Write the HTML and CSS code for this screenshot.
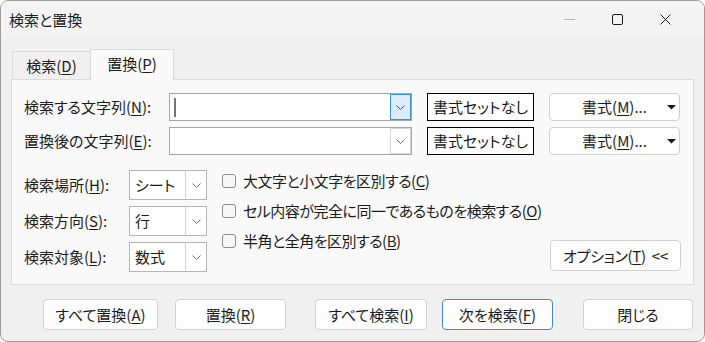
FILE: index.html
```html
<!DOCTYPE html>
<html lang="ja">
<head>
	<meta charset="UTF-8">
	<title>検索と置換</title>
	<link rel="stylesheet" href="styles.css">
</head>
<body>
	<div class="win">
		<div class="titlebar">
			<span class="title">検索と置換</span>
			<div class="ctrls">
				<span class="ctrl"><svg width="11" height="11" viewBox="0 0 11 11"><line x1="0" y1="5.5" x2="11" y2="5.5" stroke="#b4b4b4" stroke-width="1"/></svg></span>
				<span class="ctrl"><svg width="11" height="11" viewBox="0 0 11 11"><rect x="0.5" y="0.5" width="10" height="10" rx="1.5" fill="none" stroke="#1b1b1b" stroke-width="1"/></svg></span>
				<span class="ctrl"><svg width="11" height="11" viewBox="0 0 11 11"><path d="M0.5 0.5L10.5 10.5M10.5 0.5L0.5 10.5" stroke="#1b1b1b" stroke-width="1"/></svg></span>
			</div>
		</div>

		<div class="tabs">
			<div class="tab">検索(<u>D</u>)</div>
			<div class="tab active">置換(<u>P</u>)</div>
		</div>

		<div class="panel">
			<div class="top">
				<div class="lbl">検索する文字列(<u>N</u>):</div>
				<div class="edit">
					<span class="text"><span class="caret"></span></span>
					<span class="drop hot"><svg width="9" height="5" viewBox="0 0 9 5"><polyline points="0.5,0.5 4.5,4.5 8.5,0.5" fill="none" stroke="#505050" stroke-width="1"/></svg></span>
				</div>
				<div class="fmtbox">書式セットなし</div>
				<div class="btn fmt"><span></span><span>書式(<u>M</u>)...</span><span class="tri"><svg width="9" height="5" viewBox="0 0 9 5"><polygon points="0,0 9,0 4.5,4.5" fill="#1b1b1b"/></svg></span></div>

				<div class="lbl">置換後の文字列(<u>E</u>):</div>
				<div class="edit">
					<span class="text"></span>
					<span class="drop"><svg width="9" height="5" viewBox="0 0 9 5"><polyline points="0.5,0.5 4.5,4.5 8.5,0.5" fill="none" stroke="#707070" stroke-width="1"/></svg></span>
				</div>
				<div class="fmtbox">書式セットなし</div>
				<div class="btn fmt"><span></span><span>書式(<u>M</u>)...</span><span class="tri"><svg width="9" height="5" viewBox="0 0 9 5"><polygon points="0,0 9,0 4.5,4.5" fill="#1b1b1b"/></svg></span></div>
			</div>

			<div class="lower">
				<div class="fields">
					<div class="lbl">検索場所(<u>H</u>):</div>
					<div class="combo"><span class="val">シート</span><span class="arr"><svg width="9" height="5" viewBox="0 0 9 5"><polyline points="0.5,0.5 4.5,4.5 8.5,0.5" fill="none" stroke="#707070" stroke-width="1"/></svg></span></div>
					<div class="lbl">検索方向(<u>S</u>):</div>
					<div class="combo"><span class="val">行</span><span class="arr"><svg width="9" height="5" viewBox="0 0 9 5"><polyline points="0.5,0.5 4.5,4.5 8.5,0.5" fill="none" stroke="#707070" stroke-width="1"/></svg></span></div>
					<div class="lbl">検索対象(<u>L</u>):</div>
					<div class="combo"><span class="val">数式</span><span class="arr"><svg width="9" height="5" viewBox="0 0 9 5"><polyline points="0.5,0.5 4.5,4.5 8.5,0.5" fill="none" stroke="#707070" stroke-width="1"/></svg></span></div>
				</div>

				<div class="checks">
					<div class="chk"><span class="box"></span>大文字と小文字を区別する(<u>C</u>)</div>
					<div class="chk"><span class="box"></span>セル内容が完全に同一であるものを検索する(<u>O</u>)</div>
					<div class="chk"><span class="box"></span>半角と全角を区別する(<u>B</u>)</div>
				</div>

				<div class="btn opt">オプション(<u>T</u>)&nbsp;&nbsp;&lt;&lt;</div>
			</div>
		</div>

		<div class="footer">
			<div class="btn b1">すべて置換(<u>A</u>)</div>
			<div class="btn b2">置換(<u>R</u>)</div>
			<div class="btn b3">すべて検索(<u>I</u>)</div>
			<div class="btn b4 def">次を検索(<u>F</u>)</div>
			<div class="btn b5">閉じる</div>
		</div>
	</div>
</body>
</html>
```

FILE: styles.css
```css
*{
	box-sizing: border-box;
}
body{
	margin: 0;
	background: #fff;
	font-family: "Noto Sans CJK JP", "Noto Sans", sans-serif;
	font-size: 15px;
	font-feature-settings: "palt";
	color: #1b1b1b;
}
u{
	text-underline-offset: 2px;
}
.win{
	width: 705px;
	height: 342px;
	background: #f0f0f0;
	border: 1px solid #9c9c9c;
	border-radius: 8px;
	overflow: hidden;
	display: flex;
	flex-direction: column;
}

/* title bar */
.titlebar{
	height: 37px;
	flex: none;
	background: #f3f3f3;
	display: flex;
	align-items: center;
	padding-left: 8px;
}
.title{
	line-height: 20px;
}
.ctrls{
	margin-left: auto;
	display: flex;
	padding-right: 15px;
}
.ctrl{
	width: 48px;
	height: 30px;
	display: flex;
	align-items: center;
	justify-content: center;
}

/* tabs */
.tabs{
	display: flex;
	align-items: flex-end;
	margin: 10px 0 0 11px;
	height: 31px;
	flex: none;
}
.tab{
	width: 78px;
	height: 28px;
	border: 1px solid #dadada;
	border-bottom: none;
	border-right: none;
	display: flex;
	align-items: center;
	justify-content: center;
	line-height: 20px;
}
.tab.active{
	width: 84px;
	height: 31px;
	border-right: 1px solid #dadada;
	background: #f9f9f9;
	margin-bottom: -1px;
	position: relative;
	padding-bottom: 2px;
}

/* panel */
.panel{
	margin: 0 10px 0 10px;
	border: 1px solid #dadada;
	background: #f9f9f9;
	padding: 13px 12px 12px 12px;
	flex: none;
}
.lbl{
	display: flex;
	align-items: center;
	white-space: nowrap;
	line-height: 20px;
}
.top{
	display: grid;
	grid-template-columns: 130px 243px 107px 131px;
	grid-auto-rows: 28px;
	column-gap: 15px;
	row-gap: 6px;
}
.edit{
	display: flex;
	border: 1px solid #a6a6a6;
	background: #fff;
}
.edit .text{
	flex: 1;
	display: flex;
	align-items: center;
	padding-left: 4px;
}
.caret{
	width: 2px;
	height: 19px;
	background: #767676;
}
.drop{
	width: 21px;
	border: 1px solid #d6d6d6;
	display: flex;
	align-items: center;
	justify-content: center;
}
.drop.hot{
	border-color: #3d8fd8;
	background: #dcecfc;
}
.fmtbox{
	border: 1px solid #000;
	background: #fff;
	display: flex;
	align-items: center;
	justify-content: center;
	line-height: 20px;
}
.btn{
	border: 1px solid #d0d0d0;
	border-radius: 4px;
	background: #fdfdfd;
	display: flex;
	align-items: center;
	justify-content: center;
	line-height: 20px;
	white-space: nowrap;
}
.btn.fmt{
	display: grid;
	grid-template-columns: 1fr auto 1fr;
	align-items: center;
}
.tri{
	justify-self: end;
	padding-right: 3px;
	display: flex;
}

/* lower part */
.lower{
	display: flex;
	margin-top: 11px;
}
.fields{
	display: grid;
	grid-template-columns: 105px 78px;
	grid-auto-rows: 30px;
	row-gap: 6px;
	padding-top: 4px;
}
.combo{
	display: flex;
	border: 1px solid #b6b6b6;
	background: #fff;
}
.combo .val{
	flex: 1;
	display: flex;
	align-items: center;
	padding-left: 5px;
	line-height: 20px;
}
.combo .arr{
	width: 21px;
	border-left: 1px solid #d4d4d4;
	display: flex;
	align-items: center;
	justify-content: center;
}
.checks{
	margin-left: 15px;
	display: flex;
	flex-direction: column;
}
.chk{
	height: 30px;
	display: flex;
	align-items: center;
	line-height: 20px;
	white-space: nowrap;
	letter-spacing: -0.5px;
}
.box{
	width: 14px;
	height: 14px;
	border: 1px solid #8c8c8c;
	border-radius: 3px;
	background: #f6f6f6;
	margin-right: 7px;
}
.btn.opt{
	margin-left: auto;
	align-self: flex-end;
	width: 131px;
	height: 31px;
	margin-bottom: 1px;
	letter-spacing: -0.3px;
}

/* footer */
.footer{
	display: flex;
	margin-top: 14px;
	padding-left: 42px;
}
.footer .btn{
	height: 31px;
}
.b1{ width: 115px; }
.b2{ width: 111px; margin-left: 17px; }
.b3{ width: 112px; margin-left: 29px; }
.b4{ width: 111px; margin-left: 15px; }
.b5{ width: 110px; margin-left: 30px; }
.btn.def{
	border-color: #4a88c8;
}
```
